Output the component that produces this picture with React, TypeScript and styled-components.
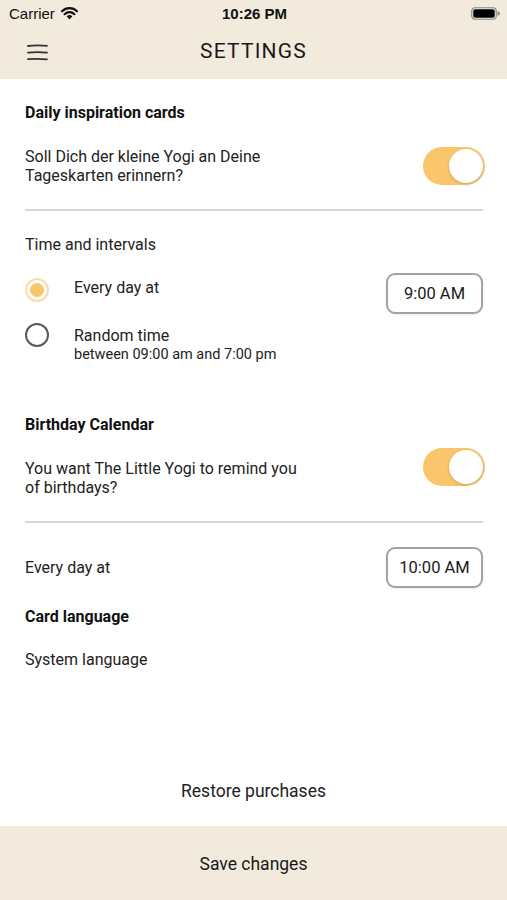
import React from "react";
import styled, { createGlobalStyle } from "styled-components";

const GlobalStyle = createGlobalStyle`
  html, body { margin: 0; padding: 0; background: #ffffff; }
  body { font-family: Roboto, "Liberation Sans", Arial, sans-serif; color: #222; -webkit-font-smoothing: antialiased; }
  * { box-sizing: border-box; }
`;

const BEIGE = "#F1EADD";
const ORANGE = "#F9C66C";

const Page = styled.div`
  width: 507px;
  min-height: 900px;
  display: flex;
  flex-direction: column;
  background: #fff;
`;

const TopArea = styled.header`
  background: ${BEIGE};
  display: flex;
  flex-direction: column;
`;

const StatusBar = styled.div`
  height: 28px;
  display: grid;
  grid-template-columns: 1fr auto 1fr;
  align-items: center;
  padding: 0 7px 2px 9px;
  font-family: "Liberation Sans", Arial, sans-serif;
  font-size: 15px;
  color: #111;
`;

const Carrier = styled.div`
  display: flex;
  align-items: center;
  gap: 5px;
`;

const Clock = styled.div`
  font-weight: 700;
  font-size: 15px;
`;

const BatteryWrap = styled.div`
  display: flex;
  justify-content: flex-end;
  align-items: center;
`;

const NavBar = styled.div`
  height: 51px;
  display: grid;
  grid-template-columns: 60px 1fr 60px;
  align-items: center;
  padding-bottom: 5px;
`;

const MenuButton = styled.div`
  display: flex;
  padding-left: 27px;
  padding-top: 2px;
`;

const Title = styled.h1`
  margin: 0;
  text-align: center;
  font-family: Roboto, "Liberation Sans", sans-serif;
  font-weight: 400;
  font-size: 21px;
  letter-spacing: 1.2px;
  color: #1a1a1a;
`;

const Content = styled.main`
  flex: 1;
  display: flex;
  flex-direction: column;
  padding: 0 22px 0 25px;
`;

const SectionTitle = styled.div<{ $mt: number }>`
  margin-top: ${(p) => p.$mt}px;
  font-weight: 700;
  font-size: 16px;
  line-height: 20px;
  color: #111;
`;

const Label = styled.div<{ $mt?: number }>`
  margin-top: ${(p) => p.$mt ?? 0}px;
  font-size: 16px;
  line-height: 20px;
  color: #222;
`;

const ToggleRow = styled.div<{ $mt: number; $textOffset: number }>`
  margin-top: ${(p) => p.$mt}px;
  display: flex;
  justify-content: space-between;
  align-items: flex-start;
  & > p {
    margin: ${(p) => p.$textOffset}px 0 0;
    font-size: 16px;
    line-height: 19px;
    color: #222;
    max-width: 300px;
  }
`;

const Switch = styled.div<{ $on: boolean }>`
  width: 62px;
  height: 38px;
  border-radius: 19px;
  background: ${(p) => (p.$on ? ORANGE : "#ddd")};
  position: relative;
  flex-shrink: 0;
  &::after {
    content: "";
    position: absolute;
    top: 2px;
    left: ${(p) => (p.$on ? "26px" : "2px")};
    width: 34px;
    height: 34px;
    border-radius: 50%;
    background: #fff;
    box-shadow: 0 1px 3px rgba(0, 0, 0, 0.18);
  }
`;

const Divider = styled.hr`
  margin: 24px 2px 0 0;
  border: none;
  height: 2px;
  background: #d6d6d6;
`;

const OptionsRow = styled.div`
  margin-top: 18px;
  display: flex;
  justify-content: space-between;
  align-items: flex-start;
`;

const RadioList = styled.div`
  padding-top: 5px;
  display: flex;
  flex-direction: column;
  gap: 21px;
`;

const RadioItem = styled.div`
  display: flex;
  align-items: flex-start;
  gap: 25px;
`;

const Radio = styled.div<{ $checked: boolean }>`
  width: 24px;
  height: 24px;
  border-radius: 50%;
  border: 2px solid ${(p) => (p.$checked ? "#FBDDA6" : "#5a5a5a")};
  display: flex;
  align-items: center;
  justify-content: center;
  flex-shrink: 0;
  &::after {
    content: "";
    width: 14px;
    height: 14px;
    border-radius: 50%;
    background: ${(p) => (p.$checked ? ORANGE : "transparent")};
  }
`;

const RadioText = styled.div<{ $mt: number }>`
  margin-top: ${(p) => p.$mt}px;
  display: flex;
  flex-direction: column;
`;

const SubText = styled.div`
  font-size: 14.5px;
  line-height: 18px;
  color: #222;
`;

const TimeButton = styled.button`
  width: 97px;
  height: 41px;
  border: 2px solid #a3a3a3;
  border-radius: 9px;
  background: #fff;
  font-family: Roboto, "Liberation Sans", sans-serif;
  font-size: 16.5px;
  color: #1a1a1a;
  padding: 0;
  margin-right: 2px;
  box-shadow: 0 1px 2px rgba(0, 0, 0, 0.08);
`;

const TimeRow = styled.div`
  margin-top: 24px;
  display: flex;
  justify-content: space-between;
  align-items: center;
`;

const RestoreRow = styled.div`
  height: 72px;
  padding-top: 2px;
  display: flex;
  align-items: center;
  justify-content: center;
  font-size: 17.5px;
  color: #222;
`;

const BottomBar = styled.footer`
  height: 74px;
  padding-top: 2px;
  background: ${BEIGE};
  display: flex;
  align-items: center;
  justify-content: center;
  font-size: 17.5px;
  color: #1a1a1a;
`;

const Wifi = () => (
  <svg width="19" height="14" viewBox="0 0 19 14">
    <path d="M9.5 13.5 L6.6 10.3 A4.2 4.2 0 0 1 12.4 10.3 Z" fill="#111" />
    <path d="M4.6 8.2 A7 7 0 0 1 14.4 8.2" stroke="#111" strokeWidth="2.2" fill="none" strokeLinecap="round" />
    <path d="M2 5.3 A10.6 10.6 0 0 1 17 5.3" stroke="#111" strokeWidth="2.2" fill="none" strokeLinecap="round" />
  </svg>
);

const Battery = () => (
  <svg width="29" height="13" viewBox="0 0 29 13">
    <rect x="0.75" y="0.75" width="24.5" height="11.5" rx="3.5" fill="none" stroke="#888" strokeWidth="1.2" />
    <rect x="2.3" y="2.3" width="21.4" height="8.4" rx="2" fill="#000" />
    <path d="M26.6 4.3 a1.8 1.8 0 0 1 0 4.4 Z" fill="#888" />
  </svg>
);

const Hamburger = () => (
  <svg width="21" height="17" viewBox="0 0 21 17">
    <path d="M1 2 Q10 0.8 20 1.8" stroke="#333" strokeWidth="1.8" fill="none" strokeLinecap="round" />
    <path d="M1 8.6 Q10 7.8 20 8.6" stroke="#333" strokeWidth="1.8" fill="none" strokeLinecap="round" />
    <path d="M1 15.2 Q10 14.5 20 15.3" stroke="#333" strokeWidth="1.8" fill="none" strokeLinecap="round" />
  </svg>
);

export default function App() {
  return (
    <>
      <GlobalStyle />
      <Page>
        <TopArea>
          <StatusBar>
            <Carrier>
              Carrier <Wifi />
            </Carrier>
            <Clock>10:26 PM</Clock>
            <BatteryWrap>
              <Battery />
            </BatteryWrap>
          </StatusBar>
          <NavBar>
            <MenuButton>
              <Hamburger />
            </MenuButton>
            <Title>SETTINGS</Title>
            <div />
          </NavBar>
        </TopArea>

        <Content>
          <SectionTitle $mt={24}>Daily inspiration cards</SectionTitle>
          <ToggleRow $mt={24} $textOffset={0}>
            <p>
              Soll Dich der kleine Yogi an Deine
              <br />
              Tageskarten erinnern?
            </p>
            <Switch $on />
          </ToggleRow>
          <Divider />

          <Label $mt={24}>Time and intervals</Label>
          <OptionsRow>
            <RadioList>
              <RadioItem>
                <Radio $checked />
                <RadioText $mt={0}>
                  <Label>Every day at</Label>
                </RadioText>
              </RadioItem>
              <RadioItem>
                <Radio $checked={false} />
                <RadioText $mt={3}>
                  <Label>Random time</Label>
                  <SubText>between 09:00 am and 7:00 pm</SubText>
                </RadioText>
              </RadioItem>
            </RadioList>
            <TimeButton>9:00 AM</TimeButton>
          </OptionsRow>

          <SectionTitle $mt={51}>Birthday Calendar</SectionTitle>
          <ToggleRow $mt={13} $textOffset={11}>
            <p>
              You want The Little Yogi to remind you
              <br />
              of birthdays?
            </p>
            <Switch $on />
          </ToggleRow>
          <Divider />

          <TimeRow>
            <Label>Every day at</Label>
            <TimeButton>10:00 AM</TimeButton>
          </TimeRow>

          <SectionTitle $mt={19}>Card language</SectionTitle>
          <Label $mt={23}>System language</Label>
        </Content>

        <RestoreRow>Restore purchases</RestoreRow>
        <BottomBar>Save changes</BottomBar>
      </Page>
    </>
  );
}
